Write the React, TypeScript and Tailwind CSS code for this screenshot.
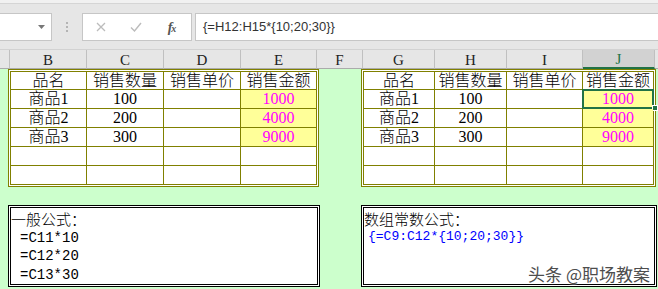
import clsx from "clsx";

const rows = [
	["品名", "销售数量", "销售单价", "销售金额"],
	["商品1", "100", "", "1000"],
	["商品2", "200", "", "4000"],
	["商品3", "300", "", "9000"],
	["", "", "", ""],
	["", "", "", ""],
];

const headers = [
	{ label: "", w: "w-[10px]" },
	{ label: "B", w: "w-[77px]" },
	{ label: "C", w: "w-[77px]" },
	{ label: "D", w: "w-[77px]" },
	{ label: "E", w: "w-[76px]" },
	{ label: "F", w: "w-[46px]" },
	{ label: "G", w: "w-[72px]" },
	{ label: "H", w: "w-[72px]" },
	{ label: "I", w: "w-[76px]" },
	{ label: "J", w: "w-[72px]", active: true },
	{ label: "", w: "w-[3px]", last: true },
];

const FormulaBar = () => {
	return (
		<div className="h-[49px] bg-[#e6e6e6]">
			<div className="h-[4px] bg-[#f1f1f1] border-b border-[#d5d5d5]" />
			<div className="flex mt-[9px] h-[28px]">
				<div className="relative w-[52px] h-full bg-white border border-l-0 border-[#c6c6c6]">
					<svg className="absolute left-[38px] top-[11px]" width="7" height="4" viewBox="0 0 7 4">
						<path d="M0 0h7L3.5 4z" fill="#777" />
					</svg>
				</div>
				<div className="w-[30px] flex flex-col items-center justify-center gap-[2px]">
					<div className="w-[2px] h-[2px] bg-[#b4b4b4]" />
					<div className="w-[2px] h-[2px] bg-[#b4b4b4]" />
					<div className="w-[2px] h-[2px] bg-[#b4b4b4]" />
				</div>
				<div className="w-[110px] h-full bg-white border border-[#c6c6c6] flex">
					<div className="w-[35px] flex items-center justify-center">
						<svg width="10" height="10" viewBox="0 0 10 10">
							<path d="M1 1l8 8M9 1l-8 8" stroke="#bcbcbc" strokeWidth="1.3" />
						</svg>
					</div>
					<div className="w-[35px] flex items-center justify-center">
						<svg width="12" height="10" viewBox="0 0 12 10">
							<path d="M1 5.5l3.5 3.5L11 1" stroke="#bcbcbc" strokeWidth="1.4" fill="none" />
						</svg>
					</div>
					<div className="w-[38px] flex items-center justify-center font-['Liberation_Serif',serif] italic font-bold text-[#555] text-[14px]">
						f<span className="text-[10px] -ml-[1px] mt-[3px]">x</span>
					</div>
				</div>
				<div className="flex-1 ml-[3px] h-full bg-white border border-r-0 border-[#c6c6c6] flex items-center pl-[7px] text-[13px] text-[#333] font-['Liberation_Sans',sans-serif]">
					{"{=H12:H15*{10;20;30}}"}
				</div>
			</div>
		</div>
	);
};

const ColumnHeaders = () => {
	return (
		<div className="flex h-[20px] border-t border-[#d2d2d2] font-['Liberation_Serif',serif] text-[15px] text-[#222]">
			{headers.map((h, i) => (
				<div
					key={i}
					className={clsx(
						"relative flex items-center justify-center pt-[2px] border-b",
						h.w,
						!h.last && "border-r border-r-[#c0c0c0]",
						h.active ? "bg-[#d2d2d2] text-[#217346] border-b-2 border-b-[#217346]" : "bg-[#e6e6e6] border-b-[#ababab]",
					)}
				>
					{h.label}
				</div>
			))}
		</div>
	);
};

const DataTable = ({ cols, selected }: { cols: string; selected?: boolean }) => {
	return (
		<div
			className={clsx(
				"grid grid-rows-[18px_19px_19px_19px_19px_18px] border-[3px] border-double border-[#808000] bg-white",
				cols,
			)}
		>
			{rows.map((row, r) =>
				row.map((text, c) => {
					const yellow = c === 3 && r >= 1 && r <= 3;
					return (
						<div
							key={`${r}-${c}`}
							className={clsx(
								"relative flex items-center justify-center leading-none text-[16px] font-light border-[#808000]",
								"font-['Liberation_Serif','Noto_Sans_CJK_SC',serif]",
								c < 3 && "border-r",
								r < rows.length - 1 && "border-b",
								yellow ? "bg-[#ffff99] text-[#ff00ff]" : "text-black",
							)}
						>
							{text}
							{selected && r === 1 && c === 3 && (
								<>
									<div className="absolute -left-px -top-px -right-px -bottom-px border-2 border-[#217346]" />
									<div className="absolute -right-[5px] -bottom-[3px] w-[6px] h-[6px] bg-[#217346] border border-white" />
								</>
							)}
						</div>
					);
				}),
			)}
		</div>
	);
};

const App = () => {
	return (
		<div className="w-[658px] h-[289px] overflow-hidden bg-[#ccffcc]">
			<FormulaBar />
			<ColumnHeaders />

			<div className="flex pl-[8px]">
				<DataTable cols="grid-cols-[76px_77px_77px_75px]" />
				<div className="ml-[42px]">
					<DataTable cols="grid-cols-[71px_72px_76px_70px]" selected />
				</div>
			</div>

			<div className="flex pl-[8px] mt-[18px]">
				<div className="w-[312px] h-[82px] border-[3px] border-double border-black bg-white pt-[2px] leading-[18.5px] text-black">
					<div className="text-[15px] font-light font-['Noto_Sans_CJK_SC',sans-serif]">一般公式：</div>
					<div className="pl-[9px] text-[14px] font-['Liberation_Mono',monospace]">=C11*10</div>
					<div className="pl-[9px] text-[14px] font-['Liberation_Mono',monospace]">=C12*20</div>
					<div className="pl-[9px] text-[14px] font-['Liberation_Mono',monospace]">=C13*30</div>
				</div>

				<div className="relative ml-[41px] w-[296px] h-[82px] border-[3px] border-double border-black bg-white pt-[2px] leading-[18px]">
					<div className="text-[15px] font-light text-black font-['Noto_Sans_CJK_SC',sans-serif]">数组常数公式：</div>
					<div className="pl-[4px] text-[13px] text-[#0000ff] font-['Liberation_Mono',monospace]">
						{"{=C9:C12*{10;20;30}}"}
					</div>
					<div className="absolute right-[4px] bottom-[2px] text-[17px] leading-none text-[#4d4d4d] font-['Noto_Sans_CJK_SC',sans-serif] [text-shadow:0_0_2px_#fff,0_0_1px_#fff]">
						头条 @职场教案
					</div>
				</div>
			</div>
		</div>
	);
};

export default App;
